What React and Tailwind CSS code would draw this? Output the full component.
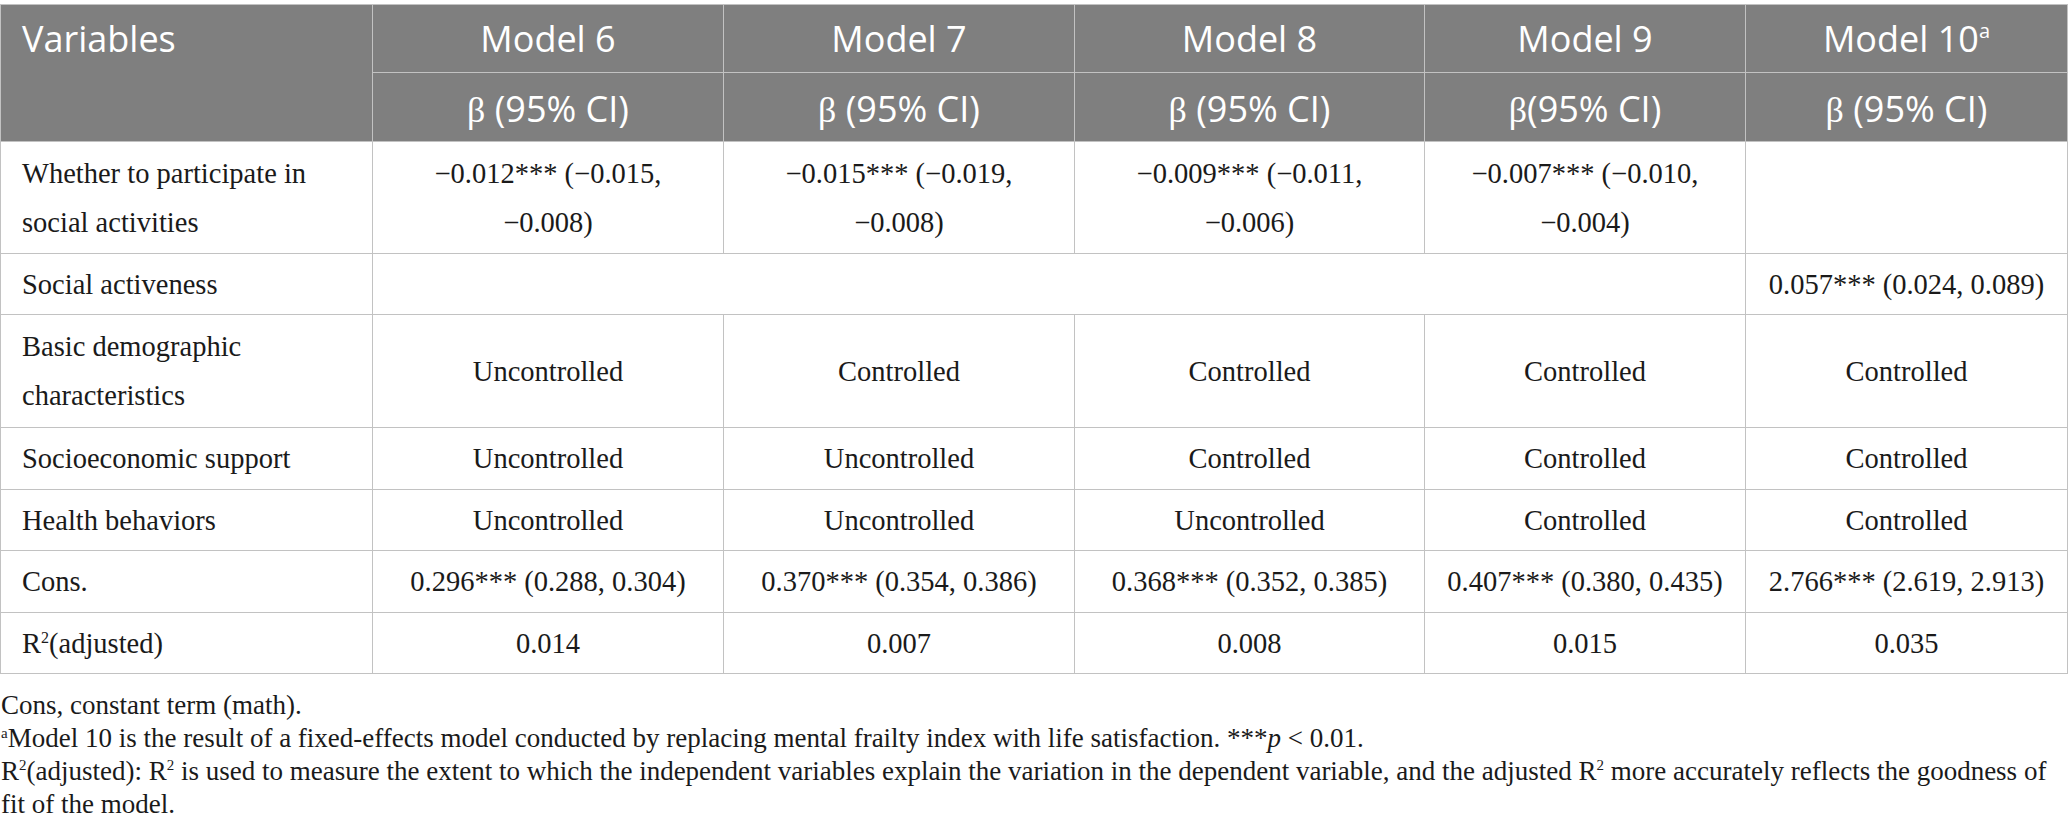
import React from "react";

const H = "bg-[#7f7f7f] text-white font-['Open_Sans',sans-serif] font-normal text-[36px] leading-[49px] flex items-center justify-center whitespace-nowrap";
const C = "bg-white text-[#1a1a1a] font-['Liberation_Serif',serif] text-[28.5px] leading-[49px] flex items-center justify-center text-center whitespace-nowrap";
const L = "bg-white text-[#1a1a1a] font-['Liberation_Serif',serif] text-[28.5px] leading-[49px] flex items-center pl-[21px] whitespace-nowrap";

function Beta({ nospace }) {
  return (
    <span>
      <span className="font-['Liberation_Serif',serif] font-normal">β</span>
      {nospace ? "" : " "}(95% CI)
    </span>
  );
}

function Sup2({ small }) {
  return small ? (
    <sup className="text-[15px] leading-none align-baseline relative -top-[10px]">2</sup>
  ) : (
    <sup className="text-[16px] leading-none align-baseline relative -top-[10px]">2</sup>
  );
}

export default function App() {
  const ctrl = [
    ["Socioeconomic support", ["Uncontrolled", "Uncontrolled", "Controlled", "Controlled", "Controlled"]],
    ["Health behaviors", ["Uncontrolled", "Uncontrolled", "Uncontrolled", "Controlled", "Controlled"]],
    ["Cons.", ["0.296*** (0.288, 0.304)", "0.370*** (0.354, 0.386)", "0.368*** (0.352, 0.385)", "0.407*** (0.380, 0.435)", "2.766*** (2.619, 2.913)"]],
  ];
  return (
    <div className="w-[2068px] bg-white pt-[4px]">
      <div className="grid grid-cols-[371px_350px_350px_349px_320px_321px] grid-rows-[67px_68px_111px_60px_112px_61px_60px_61px_60px] gap-px bg-[#c2c2c2] border border-[#c2c2c2]">
        {/* header */}
        <div className={H + " row-span-2 !items-start !justify-start pl-[21px] pt-[9px]"}>Variables</div>
        <div className={H}>Model 6</div>
        <div className={H}>Model 7</div>
        <div className={H}>Model 8</div>
        <div className={H}>Model 9</div>
        <div className={H}>
          <span>
            Model 10<sup className="text-[20px] leading-none align-baseline relative -top-[14px]">a</sup>
          </span>
        </div>
        <div className={H + " pt-[4px]"}><Beta /></div>
        <div className={H + " pt-[4px]"}><Beta /></div>
        <div className={H + " pt-[4px]"}><Beta /></div>
        <div className={H + " pt-[4px]"}><Beta nospace /></div>
        <div className={H + " pt-[4px]"}><Beta /></div>

        {/* row: whether to participate */}
        <div className={L}>
          <div>Whether to participate in<br />social activities</div>
        </div>
        <div className={C}><div>−0.012*** (−0.015,<br />−0.008)</div></div>
        <div className={C}><div>−0.015*** (−0.019,<br />−0.008)</div></div>
        <div className={C}><div>−0.009*** (−0.011,<br />−0.006)</div></div>
        <div className={C}><div>−0.007*** (−0.010,<br />−0.004)</div></div>
        <div className={C}></div>

        {/* social activeness */}
        <div className={L}>Social activeness</div>
        <div className={C + " col-span-4"}></div>
        <div className={C}>0.057*** (0.024, 0.089)</div>

        {/* basic demographic */}
        <div className={L}>
          <div>Basic demographic<br />characteristics</div>
        </div>
        <div className={C}>Uncontrolled</div>
        <div className={C}>Controlled</div>
        <div className={C}>Controlled</div>
        <div className={C}>Controlled</div>
        <div className={C}>Controlled</div>

        {ctrl.map(([label, vals]) => (
          <React.Fragment key={label}>
            <div className={L}>{label}</div>
            {vals.map((v, i) => (
              <div key={i} className={C}>{v}</div>
            ))}
          </React.Fragment>
        ))}

        {/* R2 */}
        <div className={L}>
          <span>R<Sup2 />(adjusted)</span>
        </div>
        <div className={C}>0.014</div>
        <div className={C}>0.007</div>
        <div className={C}>0.008</div>
        <div className={C}>0.015</div>
        <div className={C}>0.035</div>
      </div>

      <div className="mt-[15px] pl-[1px] font-['Liberation_Serif',serif] text-[27px] leading-[33px] text-[#1a1a1a]">
        <div className="whitespace-nowrap">Cons, constant term (math).</div>
        <div className="whitespace-nowrap">
          <sup className="text-[15px] leading-none align-baseline relative -top-[9px]">a</sup>Model 10 is the result of a fixed-effects model conducted by replacing mental frailty index with life satisfaction. ***<i>p</i> &lt; 0.01.
        </div>
        <div className="whitespace-nowrap">
          R<Sup2 small />(adjusted): R<Sup2 small /> is used to measure the extent to which the independent variables explain the variation in the dependent variable, and the adjusted R<Sup2 small /> more accurately reflects the goodness of
        </div>
        <div className="whitespace-nowrap">fit of the model.</div>
      </div>
    </div>
  );
}
